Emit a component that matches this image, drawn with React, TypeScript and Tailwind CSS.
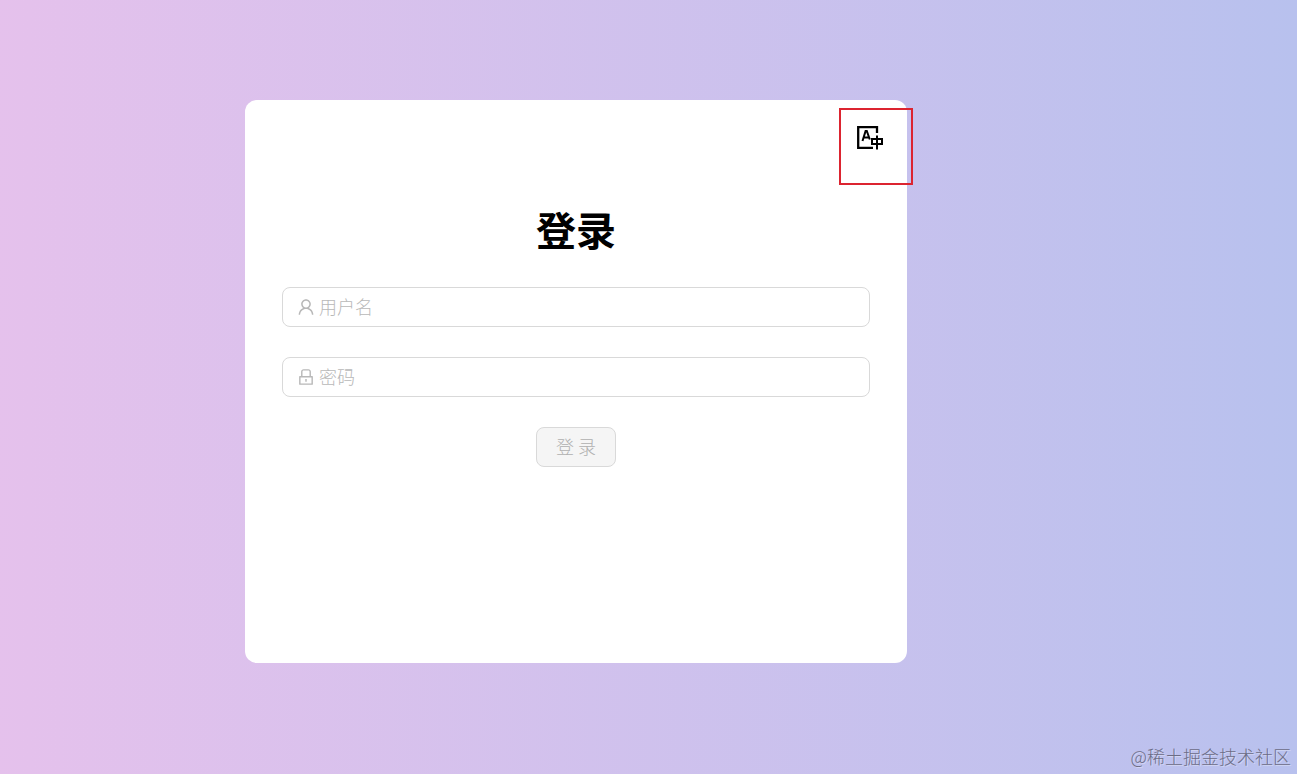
import { AiOutlineLock, AiOutlineUser } from 'react-icons/ai';

const LanguageIcon = () => (
  <svg
    viewBox="0 0 26 24"
    className="h-6 w-[26px]"
    fill="none"
    stroke="currentColor"
    strokeWidth="2"
    aria-hidden="true"
  >
    <path d="M20 7V1.200H1.200v20.600H16" strokeWidth="2.300" />
    <path d="M5.500 15 8.600 5h1.200l3 8.500M7 11.500h5" strokeWidth="2" />
    <path d="M15 13h10v5H15z" />
    <path d="M20 9.500V23.500" />
  </svg>
);

const inputBox =
  'flex h-10 items-center gap-[3px] rounded-lg border border-[#d9d9d9] bg-white px-[13px] text-[#b8b8b8]';

const inputText =
  'min-w-0 flex-1 bg-transparent pb-0.5 text-lg leading-6 font-light text-gray-800 outline-none placeholder:text-[#b8b8b8]';

export default function App() {
  return (
    <main className="relative min-h-screen bg-linear-to-r from-[#e5c1ec] to-[#b8c1ee] pt-[100px] pr-[390px] pl-[245px] font-['Noto_Sans_CJK_SC',sans-serif]">
      <section className="relative min-h-[563px] rounded-xl bg-white px-[37px] pt-[102px]">
        <button
          type="button"
          aria-label="切换语言"
          className="absolute top-[26px] right-6 text-black"
        >
          <LanguageIcon />
        </button>
        {/* Highlight around the language switch */}
        <div className="pointer-events-none absolute top-2 -right-1.5 h-[77px] w-[74px] border-2 border-[#dc2430]" />

        <h1 className="text-center text-[40px] leading-[54px] font-bold text-black">登录</h1>

        <form className="mt-[31px] flex flex-col gap-[30px]">
          <label className={inputBox}>
            <AiOutlineUser className="size-5" aria-hidden="true" />
            <input type="text" placeholder="用户名" aria-label="用户名" className={inputText} />
          </label>
          <label className={inputBox}>
            <AiOutlineLock className="size-5" aria-hidden="true" />
            <input type="password" placeholder="密码" aria-label="密码" className={inputText} />
          </label>
          <button
            type="submit"
            disabled
            className="h-10 w-20 self-center rounded-lg border border-[#d9d9d9] bg-[#f5f5f5] pb-0.5 text-lg font-light text-[#b0b0b0]"
          >
            登 录
          </button>
        </form>
      </section>

      <p className="absolute right-1.5 bottom-1.5 text-lg leading-6 font-light text-[#6c6c86] [text-shadow:1px_1px_0_rgba(255,255,255,0.35)]">
        @稀土掘金技术社区
      </p>
    </main>
  );
}
